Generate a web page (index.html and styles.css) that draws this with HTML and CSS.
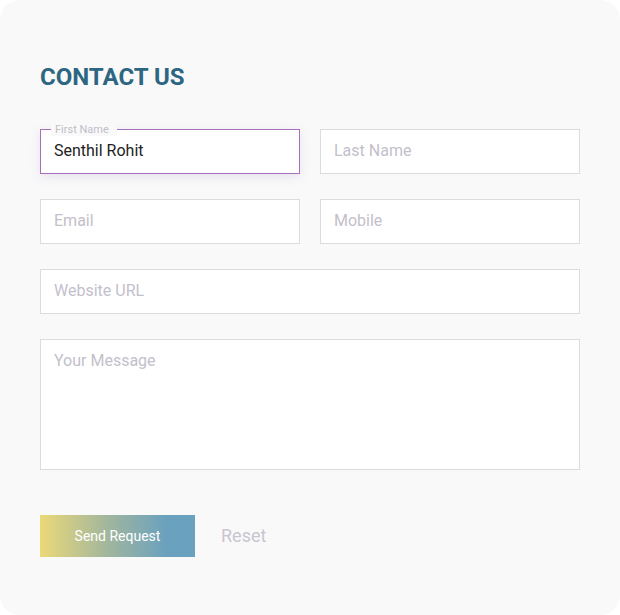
FILE: index.html
```html
<!DOCTYPE html>
<html lang="en">
<head>
<meta charset="utf-8">
<title>Contact Us</title>
<link rel="stylesheet" href="styles.css">
</head>
<body>
<div class="card">
  <h1 class="title">CONTACT US</h1>
  <form class="form">
    <div class="grid">
      <div class="field">
        <span class="float-label">First Name</span>
        <input class="input input-active" type="text" value="Senthil Rohit">
      </div>
      <div class="field">
        <input class="input" type="text" placeholder="Last Name">
      </div>
      <div class="field">
        <input class="input" type="text" placeholder="Email">
      </div>
      <div class="field">
        <input class="input" type="text" placeholder="Mobile">
      </div>
      <div class="field field-wide">
        <input class="input" type="text" placeholder="Website URL">
      </div>
      <div class="field field-wide">
        <textarea class="input textarea" placeholder="Your Message"></textarea>
      </div>
    </div>
    <div class="actions">
      <button class="btn-send" type="button">Send Request</button>
      <button class="btn-reset" type="button">Reset</button>
    </div>
  </form>
</div>
</body>
</html>
```
FILE: styles.css
```css
* { box-sizing: border-box; }
html, body {
  margin: 0;
  padding: 0;
  background: #ffffff;
}
body {
  font-family: Roboto, "Liberation Sans", sans-serif;
}
.card {
  width: 620px;
  height: 615px;
  background: #f9f9f9;
  border-radius: 20px;
  padding: 63px 40px 0 40px;
}
.title {
  margin: 0;
  font-size: 24px;
  line-height: 28px;
  font-weight: 700;
  color: #2d6682;
}
.form {
  margin-top: 38px;
}
.grid {
  display: grid;
  grid-template-columns: 1fr 1fr;
  column-gap: 20px;
  row-gap: 25px;
}
.field {
  position: relative;
}
.field-wide {
  grid-column: 1 / span 2;
}
.input {
  display: block;
  width: 100%;
  height: 45px;
  margin: 0;
  border: 1px solid #dcdcdc;
  border-radius: 0;
  background: #ffffff;
  padding: 0 13px 2px 13px;
  font-family: Roboto, "Liberation Sans", sans-serif;
  font-size: 16px;
  color: #222222;
  outline: none;
}
.input::placeholder {
  color: #c3bfcb;
  opacity: 1;
}
.input-active {
  border-color: #a870ba;
  box-shadow: 0 3px 10px rgba(120, 90, 160, 0.14);
}
.float-label {
  position: absolute;
  left: 11px;
  top: -6px;
  padding: 0 8px 0 4px;
  font-size: 11px;
  line-height: 13px;
  color: #c2bec9;
  background: #f9f9f9;
  z-index: 1;
}
.textarea {
  height: 131px;
  padding-top: 11px;
  line-height: 20px;
  resize: none;
}
.actions {
  display: flex;
  align-items: center;
  margin-top: 45px;
}
.btn-send {
  width: 155px;
  height: 42px;
  border: none;
  border-radius: 0;
  padding: 0;
  background: linear-gradient(to right, #ebd978 0%, #9fb59f 45%, #6aa1be 82%, #6aa1be 100%);
  color: #ffffff;
  font-family: Roboto, "Liberation Sans", sans-serif;
  font-size: 14px;
}
.btn-reset {
  margin-left: 26px;
  padding: 0 0 2px 0;
  border: none;
  background: none;
  font-family: Roboto, "Liberation Sans", sans-serif;
  font-size: 18px;
  color: #c9c5d1;
}
```
